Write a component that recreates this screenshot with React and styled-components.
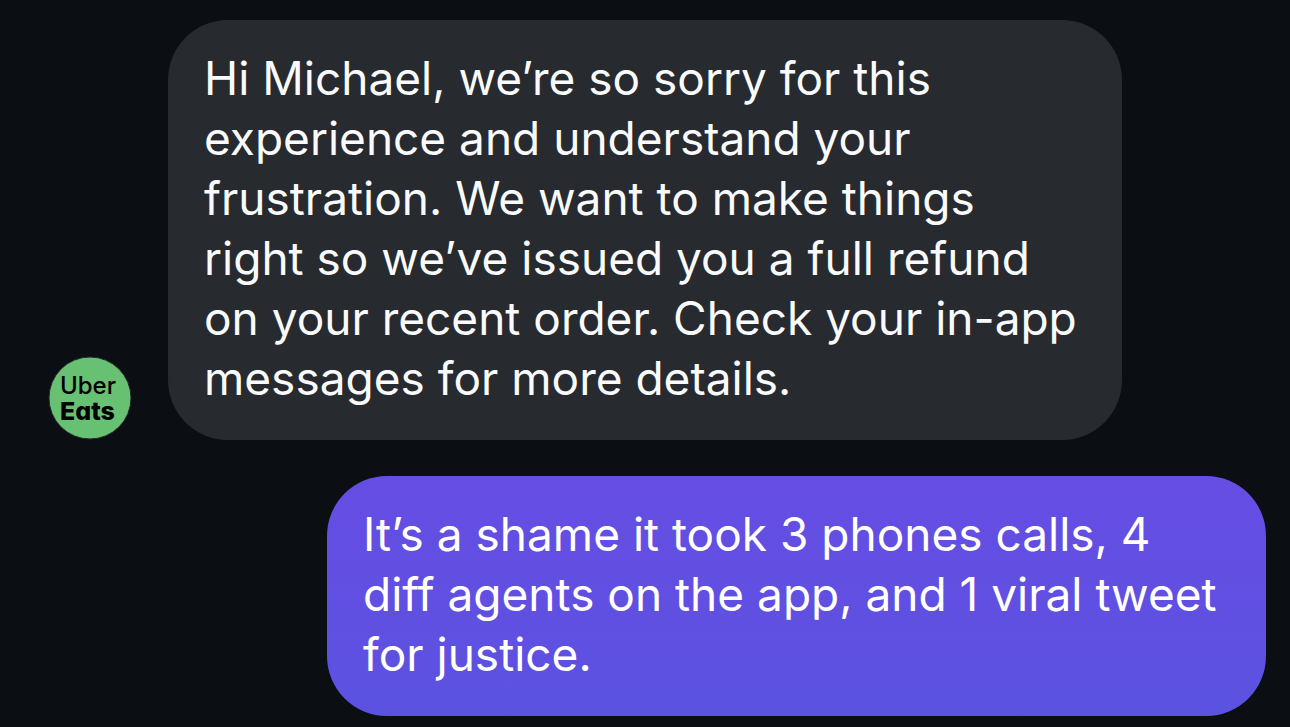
import React from "react";
import styled, { createGlobalStyle } from "styled-components";

const GlobalStyle = createGlobalStyle`
  * { box-sizing: border-box; }
  body { margin: 0; background: #0b0f14; }
`;

const Thread = styled.main`
  display: flex;
  flex-direction: column;
  gap: 36px;
  min-height: 100vh;
  padding: 20px 24px 11px 48px;
  background: #0b0f14;
  font-family: Inter, "Liberation Sans", sans-serif;
`;

const MessageRow = styled.article`
  display: flex;
  align-items: flex-end;
  gap: 36px;
  justify-content: ${({ $own }) => ($own ? "flex-end" : "flex-start")};
`;

const Avatar = styled.svg`
  flex: none;
  width: 84px;
  height: 84px;
  font-feature-settings: "cv11";
`;

const Bubble = styled.p`
  margin: 0;
  padding: 28px 36px 32px;
  max-width: ${({ $own }) => ($own ? "939px" : "954px")};
  border-radius: 60px;
  font-size: 46px;
  line-height: 60px;
  color: ${({ $own }) => ($own ? "#ffffff" : "#f9fafb")};
  background: ${({ $own }) =>
    $own ? "linear-gradient(#664de3, #5b52e1)" : "#272a2f"};
`;

const BrandAvatar = () => (
  <Avatar viewBox="0 0 84 84" role="img" aria-label="Uber Eats">
    <circle cx="42" cy="42" r="41" fill="#68c072" stroke="#25292e" />
    <text x="12" y="38" fontSize="24" fontWeight="500">Uber</text>
    <text x="12" y="64" fontSize="25" fontWeight="800">Eats</text>
  </Avatar>
);

export default function App() {
  return (
    <>
      <GlobalStyle />
      <Thread>
        <MessageRow>
          <BrandAvatar />
          <Bubble>
            Hi Michael, we’re so sorry for this experience and understand your
            frustration. We want to make things right so we’ve issued you a full
            refund on your recent order. Check your in-app messages for more
            details.
          </Bubble>
        </MessageRow>
        <MessageRow $own>
          <Bubble $own>
            It’s a shame it took 3 phones calls, 4 diff agents on the app, and 1
            viral tweet for justice.
          </Bubble>
        </MessageRow>
      </Thread>
    </>
  );
}
